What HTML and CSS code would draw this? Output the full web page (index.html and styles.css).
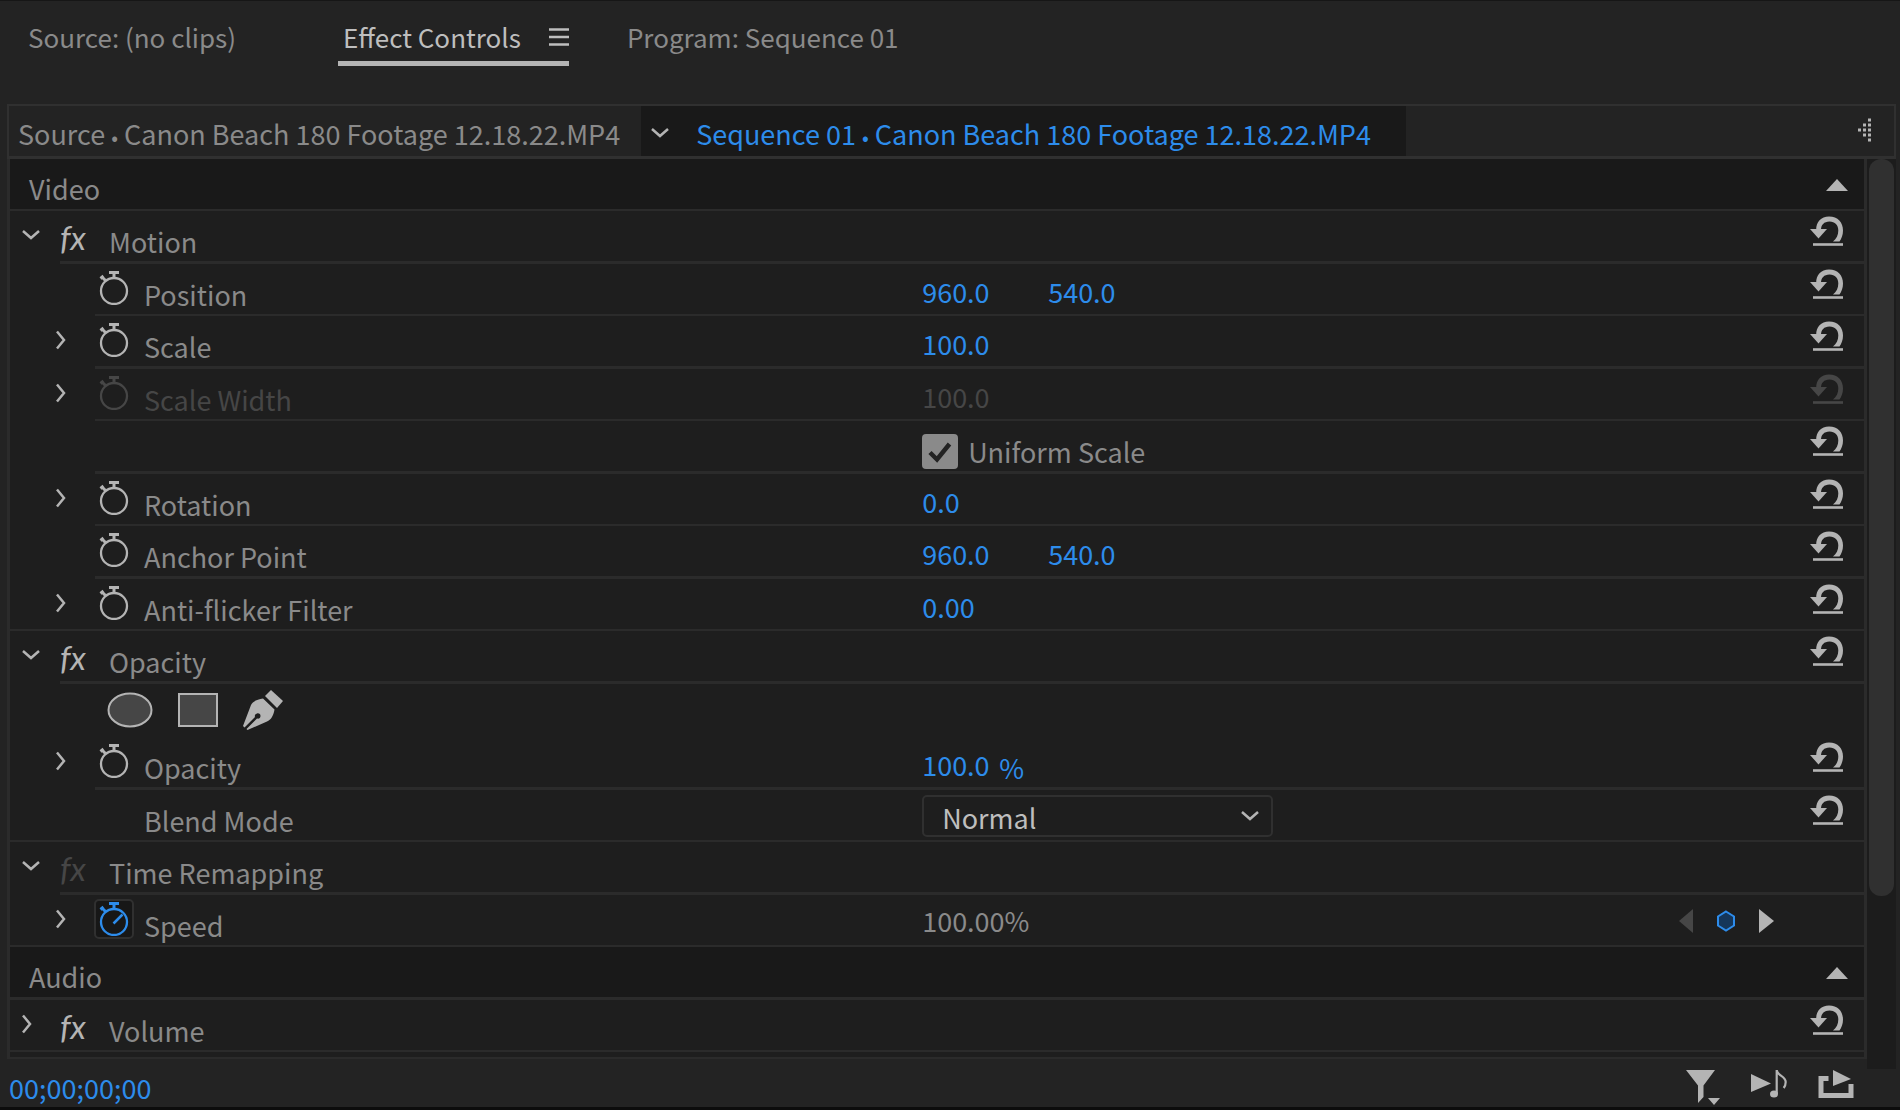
FILE: index.html
```html
<!DOCTYPE html>
<html lang="en">
<head>
    <meta charset="UTF-8">
    <title>Effect Controls</title>
    <link rel="stylesheet" href="styles.css">
</head>

<body>

<!-- icons -->
<svg class="defs" width="0" height="0">
    <symbol id="down" viewBox="0 0 20 12"><path d="M2 2l8 7 8-7" fill="none" stroke="currentColor" stroke-width="2.5"/></symbol>
    <symbol id="right" viewBox="0 0 12 20"><path d="M2 1.500l7 8.500-7 8.500" fill="none" stroke="currentColor" stroke-width="2.500"/></symbol>
    <symbol id="watch" viewBox="0 0 30 34">
        <path d="M10 1.500h10M15 1v6M1.500 7.500l3-2.500M3.500 6.500l3 3" fill="none" stroke="currentColor" stroke-width="3"/>
        <circle cx="15" cy="20" r="13" fill="none" stroke="currentColor" stroke-width="2.300"/>
    </symbol>
    <symbol id="watch-on" viewBox="0 0 30 34">
        <use href="#watch"/>
        <path d="M14.500 21.500l9-9" stroke="currentColor" stroke-width="2.500"/>
    </symbol>
    <symbol id="reset" viewBox="0 0 34 31">
        <path d="M0 13h17l-8.500 9.500z" fill="currentColor"/>
        <path d="M6.200 14C6 6 11 .5 19 .5c9 0 14 6 14 14 0 4.500-1.500 8-3.500 11H23c3.500-2.500 5.300-6.500 5.300-11 0-5.500-3.300-9-8.800-9-5.500 0-8.500 3.500-8.500 8.500z" fill="currentColor"/>
        <path d="M3 28.500h30" stroke="currentColor" stroke-width="2.600"/>
    </symbol>
    <symbol id="up" viewBox="0 0 22 12"><path d="M0 12L11 0l11 12z" fill="currentColor"/></symbol>
</svg>

<nav class="tabs">
    <button class="tab tab-source">Source: (no clips)</button>
    <button class="tab tab-active">Effect Controls
        <svg width="20" height="18" viewBox="0 0 20 18"><path d="M0 1.500h20M0 9h20M0 16.500h20" stroke="currentColor" stroke-width="2.500"/></svg>
    </button>
    <button class="tab">Program: Sequence 01</button>
</nav>

<main class="panel">
    <header class="clips">
        <button class="clip">Source <span class="dot">•</span> Canon Beach 180 Footage 12.18.22.MP4</button>
        <button class="clip clip-active">
            <svg width="20" height="12"><use href="#down"/></svg>
            <span>Sequence 01 <span class="dot">•</span> Canon Beach 180 Footage 12.18.22.MP4</span>
        </button>
        <button class="grip" aria-label="Show timeline view">
            <svg width="14" height="24" viewBox="0 0 14 24"><path d="M0 12h3M5 7h3M5 12h3M5 17h3M10 2h3M10 7h3M10 12h3M10 17h3M10 22h3" stroke="currentColor" stroke-width="3"/></svg>
        </button>
    </header>

    <div class="body">
        <div class="list">
            <div class="row head">
                <h2>Video</h2>
                <button class="collapse" aria-label="Collapse video"><svg width="22" height="12"><use href="#up"/></svg></button>
            </div>

            <div class="row effect">
                <div class="name">
                    <button class="twirl" aria-label="Close Motion"><svg width="20" height="12"><use href="#down"/></svg></button>
                    <button class="fx">fx</button>
                    <span class="label">Motion</span>
                </div>
                <button class="reset" aria-label="Reset"><svg width="34" height="31"><use href="#reset"/></svg></button>
            </div>

            <div class="row prop">
                <div class="name">
                    <button class="watch" aria-label="Animate Position"><svg width="30" height="34"><use href="#watch"/></svg></button>
                    <label class="label" for="position">Position</label>
                </div>
                <div class="value"><input id="position" value="960.0"><input aria-label="Position Y" value="540.0"></div>
                <button class="reset" aria-label="Reset"><svg width="34" height="31"><use href="#reset"/></svg></button>
            </div>

            <div class="row prop">
                <div class="name">
                    <button class="twirl" aria-label="Open Scale"><svg width="12" height="20"><use href="#right"/></svg></button>
                    <button class="watch" aria-label="Animate Scale"><svg width="30" height="34"><use href="#watch"/></svg></button>
                    <label class="label" for="scale">Scale</label>
                </div>
                <div class="value"><input id="scale" value="100.0"></div>
                <button class="reset" aria-label="Reset"><svg width="34" height="31"><use href="#reset"/></svg></button>
            </div>

            <div class="row prop off">
                <div class="name">
                    <button class="twirl" aria-label="Open Scale Width"><svg width="12" height="20"><use href="#right"/></svg></button>
                    <button class="watch" aria-label="Animate Scale Width" disabled><svg width="30" height="34"><use href="#watch"/></svg></button>
                    <label class="label" for="scale-width">Scale Width</label>
                </div>
                <div class="value"><input id="scale-width" value="100.0" disabled></div>
                <button class="reset" aria-label="Reset" disabled><svg width="34" height="31"><use href="#reset"/></svg></button>
            </div>

            <div class="row prop">
                <div class="name"></div>
                <div class="value">
                    <span class="check">
                        <input type="checkbox" id="uniform" checked>
                        <svg width="24" height="22" viewBox="0 0 24 22"><path d="M2 11.500l7 7L21.500 3" fill="none" stroke="currentColor" stroke-width="4.500"/></svg>
                    </span>
                    <label class="label" for="uniform">Uniform Scale</label>
                </div>
                <button class="reset" aria-label="Reset"><svg width="34" height="31"><use href="#reset"/></svg></button>
            </div>

            <div class="row prop">
                <div class="name">
                    <button class="twirl" aria-label="Open Rotation"><svg width="12" height="20"><use href="#right"/></svg></button>
                    <button class="watch" aria-label="Animate Rotation"><svg width="30" height="34"><use href="#watch"/></svg></button>
                    <label class="label" for="rotation">Rotation</label>
                </div>
                <div class="value"><input id="rotation" value="0.0"></div>
                <button class="reset" aria-label="Reset"><svg width="34" height="31"><use href="#reset"/></svg></button>
            </div>

            <div class="row prop">
                <div class="name">
                    <button class="watch" aria-label="Animate Anchor Point"><svg width="30" height="34"><use href="#watch"/></svg></button>
                    <label class="label" for="anchor">Anchor Point</label>
                </div>
                <div class="value"><input id="anchor" value="960.0"><input aria-label="Anchor Point Y" value="540.0"></div>
                <button class="reset" aria-label="Reset"><svg width="34" height="31"><use href="#reset"/></svg></button>
            </div>

            <div class="row prop last">
                <div class="name">
                    <button class="twirl" aria-label="Open Anti-flicker Filter"><svg width="12" height="20"><use href="#right"/></svg></button>
                    <button class="watch" aria-label="Animate Anti-flicker Filter"><svg width="30" height="34"><use href="#watch"/></svg></button>
                    <label class="label" for="flicker">Anti-flicker Filter</label>
                </div>
                <div class="value"><input id="flicker" value="0.00"></div>
                <button class="reset" aria-label="Reset"><svg width="34" height="31"><use href="#reset"/></svg></button>
            </div>

            <div class="row effect">
                <div class="name">
                    <button class="twirl" aria-label="Close Opacity"><svg width="20" height="12"><use href="#down"/></svg></button>
                    <button class="fx">fx</button>
                    <span class="label">Opacity</span>
                </div>
                <button class="reset" aria-label="Reset"><svg width="34" height="31"><use href="#reset"/></svg></button>
            </div>

            <div class="row masks">
                <button aria-label="Ellipse mask"><svg width="46" height="36" viewBox="0 0 46 36"><ellipse cx="23" cy="18" rx="21.500" ry="16.500" fill="#464646" stroke="currentColor" stroke-width="2"/></svg></button>
                <button aria-label="Rectangle mask"><svg width="42" height="36" viewBox="0 0 42 36"><path d="M2 2h38v32H2z" fill="#464646" stroke="currentColor" stroke-width="2"/></svg></button>
                <button aria-label="Pen mask"><svg width="40" height="40" viewBox="0 0 40 40">
                    <path d="M28 0l12 11-6 7L22 6z" fill="currentColor"/>
                    <path d="M20 8.500l11.500 11c-1 6-3.500 10.500-7.500 12L4.500 40l-1-1L14 28.500c2 .5 3.500-.5 3.500-2.500s-1.500-3-3.500-2.500-2.500 2-2 3.500L1.500 37.500 0 36l8-21c1.500-3.500 6-5.500 12-6.500z" fill="currentColor"/>
                </svg></button>
            </div>

            <div class="row prop">
                <div class="name">
                    <button class="twirl" aria-label="Open Opacity"><svg width="12" height="20"><use href="#right"/></svg></button>
                    <button class="watch" aria-label="Animate Opacity"><svg width="30" height="34"><use href="#watch"/></svg></button>
                    <label class="label" for="opacity">Opacity</label>
                </div>
                <div class="value percent"><input id="opacity" value="100.0"><span class="label">%</span></div>
                <button class="reset" aria-label="Reset"><svg width="34" height="31"><use href="#reset"/></svg></button>
            </div>

            <div class="row prop last">
                <div class="name no-watch"><label class="label" for="blend">Blend Mode</label></div>
                <div class="value">
                    <span class="select">
                        <select id="blend"><option>Normal</option></select>
                        <svg width="20" height="12"><use href="#down"/></svg>
                    </span>
                </div>
                <button class="reset" aria-label="Reset"><svg width="34" height="31"><use href="#reset"/></svg></button>
            </div>

            <div class="row effect">
                <div class="name">
                    <button class="twirl" aria-label="Close Time Remapping"><svg width="20" height="12"><use href="#down"/></svg></button>
                    <button class="fx" disabled>fx</button>
                    <span class="label">Time Remapping</span>
                </div>
            </div>

            <div class="row prop last">
                <div class="name">
                    <button class="twirl" aria-label="Open Speed"><svg width="12" height="20"><use href="#right"/></svg></button>
                    <button class="watch watch-on" aria-label="Animate Speed"><svg width="30" height="34"><use href="#watch-on"/></svg></button>
                    <span class="label">Speed</span>
                </div>
                <div class="value"><output>100.00%</output></div>
                <div class="keys">
                    <button aria-label="Previous keyframe" disabled><svg width="16" height="26" viewBox="0 0 16 26"><path d="M15 1v24L1 13z" fill="currentColor"/></svg></button>
                    <button class="key" aria-label="Add keyframe"><svg width="18" height="22" viewBox="0 0 18 22"><path d="M9 1.500l8 5v9l-8 5-8-5v-9z" fill="#15365a" stroke="currentColor" stroke-width="2"/></svg></button>
                    <button aria-label="Next keyframe"><svg width="16" height="26" viewBox="0 0 16 26"><path d="M1 1v24l15-12z" fill="currentColor"/></svg></button>
                </div>
            </div>

            <div class="row head">
                <h2>Audio</h2>
                <button class="collapse" aria-label="Collapse audio"><svg width="22" height="12"><use href="#up"/></svg></button>
            </div>

            <div class="row effect last">
                <div class="name">
                    <button class="twirl" aria-label="Open Volume"><svg width="12" height="20"><use href="#right"/></svg></button>
                    <button class="fx">fx</button>
                    <span class="label">Volume</span>
                </div>
                <button class="reset" aria-label="Reset"><svg width="34" height="31"><use href="#reset"/></svg></button>
            </div>
        </div>

        <div class="scroll"><div class="thumb"></div></div>
    </div>
</main>

<footer class="footer">
    <input class="timecode" aria-label="Timecode" value="00;00;00;00">
    <button aria-label="Filter properties"><svg width="34" height="36" viewBox="0 0 34 36"><path d="M0 0h29L17.500 15.500V27L12 33V15.500zM22 28h12l-6 7z" fill="currentColor"/></svg></button>
    <button aria-label="Play only audio"><svg width="36" height="28" viewBox="0 0 36 28">
        <path d="M0 4l20 9.500L0 22z" fill="currentColor"/>
        <ellipse cx="23" cy="24" rx="4" ry="3.500" fill="currentColor"/>
        <path d="M25.700 24V0c.5 6 9 6 9 12 0 2-.5 4-2 6" fill="none" stroke="currentColor" stroke-width="2.200"/>
    </svg></button>
    <button aria-label="Loop playback"><svg width="36" height="29" viewBox="0 0 36 29">
        <path d="M10.500 8.500H3v17h30V14" fill="none" stroke="currentColor" stroke-width="5"/>
        <path d="M15 0l18 9-18 7z" fill="currentColor"/>
    </svg></button>
</footer>

</body>

</html>
```
FILE: styles.css
```css
* {
    box-sizing: border-box;
}
body {
    min-width: 1400px;
    min-height: 100vh;
    margin: 0;
    display: flex;
    flex-direction: column;
    border-top: 1px solid #161616;
    border-bottom: 3px solid #0c0c0c;
    background: #232323;
    color: #8a8a8a;
    font: 27px/36px "Noto Sans CJK JP", "Open Sans", sans-serif;
}
button, input, select {
    margin: 0;
    padding: 0;
    border: 0;
    background: none;
    color: inherit;
    font: inherit;
}
svg {
    display: block;
}
.defs {
    position: absolute;
}

/* panel tabs */
.tabs {
    display: flex;
    align-items: flex-start;
    padding: 17px 28px 38px;
    gap: 58px;
    font-size: 26px;
}
.tab {
    height: 48px;
    padding-bottom: 10px;
}
.tab-source {
    margin-right: 44px;
}
.tab-active {
    display: flex;
    align-items: center;
    gap: 28px;
    padding: 0 0 5px 5px;
    border-bottom: 5px solid #b4b4b4;
    color: #bebebe;
}

/* clip header */
.panel {
    margin: 0 4px 0 7px;
}
.clips {
    display: flex;
    height: 55px;
    border: 2px solid #303030;
    border-bottom-width: 3px;
}
.clip {
    padding: 6px 21px 0 9px;
}
.clip-active {
    display: flex;
    align-items: center;
    gap: 26px;
    padding: 6px 35px 0 9px;
    background: #191919;
    color: #2d8ceb;
}
.clip-active svg {
    margin-bottom: 3px;
    color: #b4b4b4;
}
.dot {
    font-size: 20px;
    line-height: 20px;
}
.grip {
    margin: 0 22px 2px auto;
    color: #b4b4b4;
}

/* effect list */
.body {
    display: flex;
}
.list {
    flex: 1;
    padding-bottom: 5px;
    border: solid #2b2b2b;
    border-width: 0 3px 2px;
    background: #1e1e1e;
}
.row {
    --indent: 0px;
    --line: 2px;
    display: flex;
    align-items: flex-start;
    height: 52px;
    background: linear-gradient(#2b2b2b, #2b2b2b) no-repeat var(--indent) bottom / 100% var(--line);
}
.row:nth-child(even) {
    --line: 3px;
    height: 53px;
}
.effect {
    --indent: 50px;
}
.prop {
    --indent: 85px;
}
.last {
    --indent: 0px;
}
.head {
    justify-content: space-between;
    padding: 0 16px 0 19px;
    background-color: #191919;
}
.head h2 {
    margin: 12px 0 0;
    font: inherit;
}
.collapse {
    margin-top: 20px;
    color: #b4b4b4;
}
.name {
    display: flex;
    align-items: flex-start;
    width: 49.2%;
}
.label {
    margin-top: 13px;
}
.name .label {
    flex: 1;
}
.twirl {
    display: flex;
    align-items: center;
    width: 39px;
    height: 48px;
    color: #b4b4b4;
}
.effect .name {
    padding-left: 11px;
}
.prop .name {
    padding-left: 84px;
}
.prop .twirl {
    margin-left: -39px;
}
.fx {
    width: 49px;
    margin-top: 8px;
    color: #b4b4b4;
    font: italic 33px/36px Lato, sans-serif;
    text-align: left;
}
.watch {
    width: 40px;
    height: 40px;
    margin: 4px 10px 0 0;
    padding: 3px 5px;
    color: #b4b4b4;
}
.watch-on {
    padding: 1px 3px;
    border: 2px solid #303030;
    border-radius: 5px;
    background: #171717;
    color: #2d8ceb;
}
.no-watch .label {
    padding-left: 50px;
}
.value {
    display: flex;
    align-items: flex-start;
    color: #2d8ceb;
}
.value input:not([type]) {
    width: 126px;
    height: 36px;
    margin-top: 10px;
}
.value output {
    margin-top: 8px;
    color: #8a8a8a;
}
.value.percent input:not([type]) {
    width: 77px;
}
.check {
    position: relative;
    width: 36px;
    height: 35px;
    margin: 13px 10px 0 0;
}
.check input {
    appearance: none;
    width: 36px;
    height: 35px;
    border-radius: 4px;
    background: #8a8a8a;
}
.check svg {
    position: absolute;
    top: 7px;
    left: 6px;
    color: #232323;
    pointer-events: none;
}
.check + .label {
    color: #8a8a8a;
}
.select {
    position: relative;
    margin-top: 5px;
}
.select select {
    appearance: none;
    display: block;
    width: 351px;
    height: 42px;
    padding: 3px 18px 0;
    border: 2px solid #303030;
    border-radius: 5px;
    color: #bebebe;
}
.select svg {
    position: absolute;
    top: 15px;
    right: 13px;
    color: #b4b4b4;
    pointer-events: none;
}
.reset {
    margin: 5px 20px 0 auto;
    color: #b4b4b4;
}
.off .label, .off input, button:disabled {
    color: #464646;
}
.masks {
    align-items: center;
    height: 53px;
    padding-left: 97px;
    gap: 24px;
    background: none;
    color: #b4b4b4;
}
.masks button {
    margin-bottom: 2px;
}
.keys {
    display: flex;
    align-items: center;
    gap: 23px;
    height: 52px;
    margin: 0 90px 0 auto;
    color: #b4b4b4;
}
.key {
    color: #2d8ceb;
}

/* scrollbar */
.scroll {
    width: 29px;
    margin-bottom: -10px;
    padding: 0 2px;
    background: #1c1c1c;
}
.thumb {
    height: 81%;
    border-radius: 12px;
    background: #303030;
}

/* bottom bar */
.footer {
    display: flex;
    align-items: flex-start;
    flex: 1;
    gap: 31px;
    padding: 11px 46px 0 9px;
    color: #b4b4b4;
}
.timecode {
    width: 200px;
    height: 36px;
    margin-right: auto;
    color: #2d8ceb;
}
```
